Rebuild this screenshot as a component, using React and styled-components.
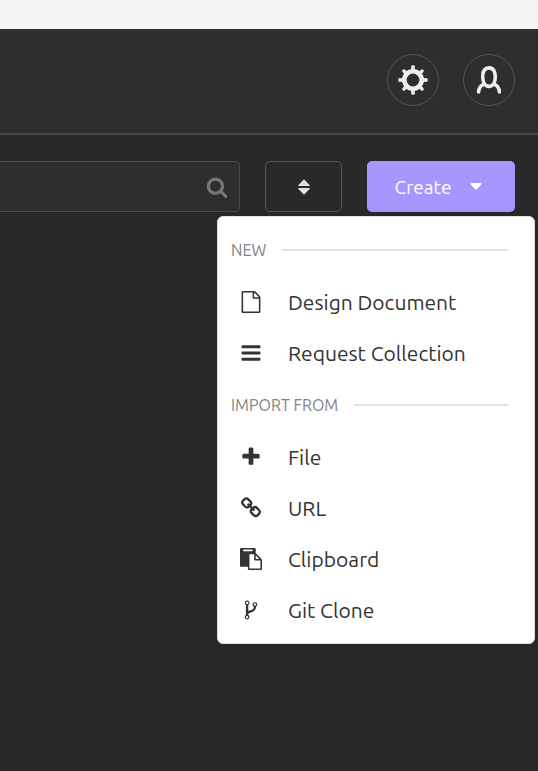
import React from "react";
import styled, { createGlobalStyle } from "styled-components";

const GlobalStyle = createGlobalStyle`
  * { box-sizing: border-box; }
  body { margin: 0; background: #292929; }
  body, button, input { font-family: Ubuntu, "Noto Sans", sans-serif; }
`;

const Page = styled.div`
  min-height: 100vh;
  background: #292929;
`;

const TitleBar = styled.div`
  height: 29px;
  background: #f6f5f3;
`;

const Header = styled.header`
  display: flex;
  justify-content: flex-end;
  gap: 24px;
  padding: 25px 23px 27px;
  background: #2e2e2e;
  border-bottom: 2px solid #464646;
`;

const RoundButton = styled.button`
  display: flex;
  align-items: center;
  justify-content: center;
  width: 52px;
  height: 52px;
  padding: 0;
  border: 1px solid #555;
  border-radius: 50%;
  background: transparent;
  color: #eee;
`;

const Toolbar = styled.div`
  display: flex;
  gap: 25px;
  padding: 26px 23px 0 0;
`;

const SearchField = styled.label`
  display: flex;
  flex: 1;
  align-items: center;
  min-width: 0;
  height: 51px;
  padding-right: 11px;
  border: 1px solid #4c4c4c;
  border-left: 0;
  border-radius: 0 5px 5px 0;
  background: #2e2e2e;
  color: #767676;
`;

const SearchInput = styled.input`
  flex: 1;
  min-width: 0;
  border: 0;
  outline: 0;
  background: transparent;
  color: #eee;
  font-size: 19px;
`;

const SortButton = styled.button`
  display: flex;
  align-items: center;
  justify-content: center;
  width: 77px;
  height: 51px;
  padding: 0;
  border: 1px solid #555;
  border-radius: 5px;
  background: transparent;
  color: #e0e0e0;
`;

const CreateAnchor = styled.div`
  position: relative;
`;

const CreateButton = styled.button`
  display: flex;
  align-items: center;
  justify-content: center;
  gap: 18px;
  width: 148px;
  height: 51px;
  padding: 0 6px 0 0;
  border: 0;
  border-radius: 5px;
  background: #a896ff;
  color: #fff;
  font-size: 19px;
`;

const Menu = styled.div`
  position: absolute;
  top: 55px;
  right: -20px;
  width: 318px;
  padding: 6px 0 8px;
  border: 1px solid #dfdfdf;
  border-radius: 6px;
  background: #fff;
  box-shadow: 0 2px 12px rgba(0, 0, 0, 0.15);
`;

const SectionTitle = styled.div`
  display: flex;
  align-items: center;
  gap: 16px;
  height: 53px;
  padding: 0 26px 0 13px;
  color: #828282;
  font-size: 16px;

  &::after {
    content: "";
    flex: 1;
    height: 2px;
    background: #e2e2e2;
  }
`;

const MenuItem = styled.button`
  display: flex;
  align-items: center;
  gap: 26px;
  width: 100%;
  height: 51px;
  padding: 0 22px;
  border: 0;
  background: transparent;
  color: #333;
  font-size: 21px;
  text-align: left;
`;

const iconPaths = {
  file: "M1596 380q28 28 48 76t20 88v1152q0 40-28 68t-68 28h-1344q-40 0-68-28t-28-68v-1600q0-40 28-68t68-28h896q40 0 88 20t76 48zm-444-244v376h376q-10-29-22-41l-313-313q-12-12-41-22zm384 1528v-1024h-416q-40 0-68-28t-28-68v-416h-768v1536h1280z",
  bars: "M1664 1344v128q0 26-19 45t-45 19h-1408q-26 0-45-19t-19-45v-128q0-26 19-45t45-19h1408q26 0 45 19t19 45zm0-512v128q0 26-19 45t-45 19h-1408q-26 0-45-19t-19-45v-128q0-26 19-45t45-19h1408q26 0 45 19t19 45zm0-512v128q0 26-19 45t-45 19h-1408q-26 0-45-19t-19-45v-128q0-26 19-45t45-19h1408q26 0 45 19t19 45z",
  plus: "M1600 736v192q0 40-28 68t-68 28h-416v416q0 40-28 68t-68 28h-192q-40 0-68-28t-28-68v-416h-416q-40 0-68-28t-28-68v-192q0-40 28-68t68-28h416v-416q0-40 28-68t68-28h192q40 0 68 28t28 68v416h416q40 0 68 28t28 68z",
  link: "M1520 1216q0-40-28-68l-208-208q-28-28-68-28-42 0-72 32 3 3 19 18.5t21.5 21.5 15 19 13 25.5 3.5 27.5q0 40-28 68t-68 28q-15 0-27.5-3.5t-25.5-13-19-15-21.5-21.5-18.5-19q-33 31-33 73 0 40 28 68l206 207q27 27 68 27 40 0 68-26l147-146q28-28 28-67zm-703-705q0-40-28-68l-206-207q-28-28-68-28-39 0-68 27l-147 146q-28 28-28 67 0 40 28 68l208 208q27 27 68 27 42 0 72-31-3-3-19-18.5t-21.5-21.5-15-19-13-25.5-3.5-27.5q0-40 28-68t68-28q15 0 27.5 3.5t25.5 13 19 15 21.5 21.5 18.5 19q33-31 33-73zm895 705q0 120-85 203l-147 146q-83 83-203 83-121 0-204-85l-206-207q-83-83-83-203 0-123 88-209l-88-88q-86 88-208 88-120 0-204-84l-208-208q-84-84-84-204t85-203l147-146q83-83 203-83 121 0 204 85l206 207q83 83 83 203 0 123-88 209l88 88q86-88 208-88 120 0 204 84l208 208q84 84 84 204z",
  paste: "M768 1664h896v-640h-416q-40 0-68-28t-28-68v-416h-384v1152zm256-1440v-64q0-13-9.5-22.5t-22.5-9.5h-704q-13 0-22.5 9.5t-9.5 22.5v64q0 13 9.5 22.5t22.5 9.5h704q13 0 22.5-9.5t9.5-22.5zm256 672h299l-299-299v299zm512 128v672q0 40-28 68t-68 28h-960q-40 0-68-28t-28-68v-160h-544q-40 0-68-28t-28-68v-1344q0-40 28-68t68-28h1088q40 0 68 28t28 68v328q21 13 36 28l408 408q28 28 48 76t20 88z",
  fork: "M672 1472q0-40-28-68t-68-28-68 28-28 68 28 68 68 28 68-28 28-68zm0-1152q0-40-28-68t-68-28-68 28-28 68 28 68 68 28 68-28 28-68zm640 128q0-40-28-68t-68-28-68 28-28 68 28 68 68 28 68-28 28-68zm96 0q0 52-26 96.5t-70 69.5q-2 287-226 414-67 38-203 81-128 40-169.5 71t-41.5 100v26q44 25 70 69.5t26 96.5q0 80-56 136t-136 56-136-56-56-136q0-52 26-96.5t70-69.5v-820q-44-25-70-69.5t-26-96.5q0-80 56-136t136-56 136 56 56 136q0 52-26 96.5t-70 69.5v497q54-26 154-57 55-17 87.5-29.5t70.5-31 59-39.5 40.5-51 28-69.5 8.5-91.5q-44-25-70-69.5t-26-96.5q0-80 56-136t136-56 136 56 56 136z",
  search: "M1216 832q0-185-131.5-316.5t-316.5-131.5-316.5 131.5-131.5 316.5 131.5 316.5 316.5 131.5 316.5-131.5 131.5-316.5zm512 832q0 52-38 90t-90 38q-54 0-90-38l-343-342q-179 124-399 124-143 0-273.5-55.5t-225-150-150-225-55.5-273.5 55.5-273.5 150-225 225-150 273.5-55.5 273.5 55.5 225 150 150 225 55.5 273.5q0 220-124 399l343 343q37 37 37 90z",
};

function Icon({ name }) {
  return (
    <svg width="22" height="22" viewBox="0 0 1792 1792" fill="currentColor" aria-hidden="true">
      <path d={iconPaths[name]} />
    </svg>
  );
}

function GearIcon() {
  return (
    <svg width="30" height="30" viewBox="0 0 30 30" fill="none" stroke="currentColor" aria-hidden="true">
      <circle cx="15" cy="15" r="8.7" strokeWidth="4.6" />
      {[0, 90, 180, 270].map((angle) => (
        <path key={angle} d="M15 0.4V5" strokeWidth="3.6" transform={`rotate(${angle} 15 15)`} />
      ))}
      {[45, 135, 225, 315].map((angle) => (
        <path key={angle} d="M15 2.2V5" strokeWidth="3.4" strokeLinecap="round" transform={`rotate(${angle} 15 15)`} />
      ))}
    </svg>
  );
}

function PersonIcon() {
  return (
    <svg width="26" height="28" viewBox="0 0 26 28" fill="none" stroke="currentColor" strokeWidth="3.6" strokeLinecap="round" aria-hidden="true">
      <path d="M13 1.9C8.8 1.9 6.7 5.4 6.7 10.6C6.7 16.2 9 20.4 13 20.4C17 20.4 19.3 16.2 19.3 10.6C19.3 5.4 17.2 1.9 13 1.9Z" />
      <path d="M7.5 18.4C4.5 19.8 2.8 22.2 2.6 26M18.5 18.4C21.5 19.8 23.2 22.2 23.4 26" />
    </svg>
  );
}

const sections = [
  {
    title: "NEW",
    items: [
      { icon: "file", label: "Design Document" },
      { icon: "bars", label: "Request Collection" },
    ],
  },
  {
    title: "IMPORT FROM",
    items: [
      { icon: "plus", label: "File" },
      { icon: "link", label: "URL" },
      { icon: "paste", label: "Clipboard" },
      { icon: "fork", label: "Git Clone" },
    ],
  },
];

export default function App() {
  return (
    <Page>
      <GlobalStyle />
      <TitleBar />
      <Header>
        <RoundButton type="button" aria-label="Settings"><GearIcon /></RoundButton>
        <RoundButton type="button" aria-label="Account"><PersonIcon /></RoundButton>
      </Header>
      <Toolbar>
        <SearchField>
          <SearchInput type="text" aria-label="Filter" />
          <Icon name="search" />
        </SearchField>
        <SortButton type="button" aria-label="Sort">
          <svg width="12" height="16" viewBox="0 0 12 16" fill="currentColor" aria-hidden="true">
            <path d="M6 0.3L11.8 6.2Q12 7 11.2 7H0.8Q0 7 0.2 6.2ZM6 15.7L0.2 9.8Q0 9 0.8 9H11.2Q12 9 11.8 9.8Z" />
          </svg>
        </SortButton>
        <CreateAnchor>
          <CreateButton type="button" aria-haspopup="menu" aria-expanded="true">
            Create
            <svg width="12" height="7" viewBox="0 0 12 7" fill="currentColor" aria-hidden="true">
              <path d="M0.8 0H11.2Q12 0.1 11.7 0.9L6.5 6.4Q6 6.8 5.5 6.4L0.3 0.9Q0 0.1 0.8 0Z" />
            </svg>
          </CreateButton>
          <Menu role="menu">
            {sections.map((section) => (
              <div key={section.title} role="group" aria-label={section.title}>
                <SectionTitle>{section.title}</SectionTitle>
                {section.items.map((item) => (
                  <MenuItem key={item.label} type="button" role="menuitem">
                    <Icon name={item.icon} />
                    {item.label}
                  </MenuItem>
                ))}
              </div>
            ))}
          </Menu>
        </CreateAnchor>
      </Toolbar>
    </Page>
  );
}
